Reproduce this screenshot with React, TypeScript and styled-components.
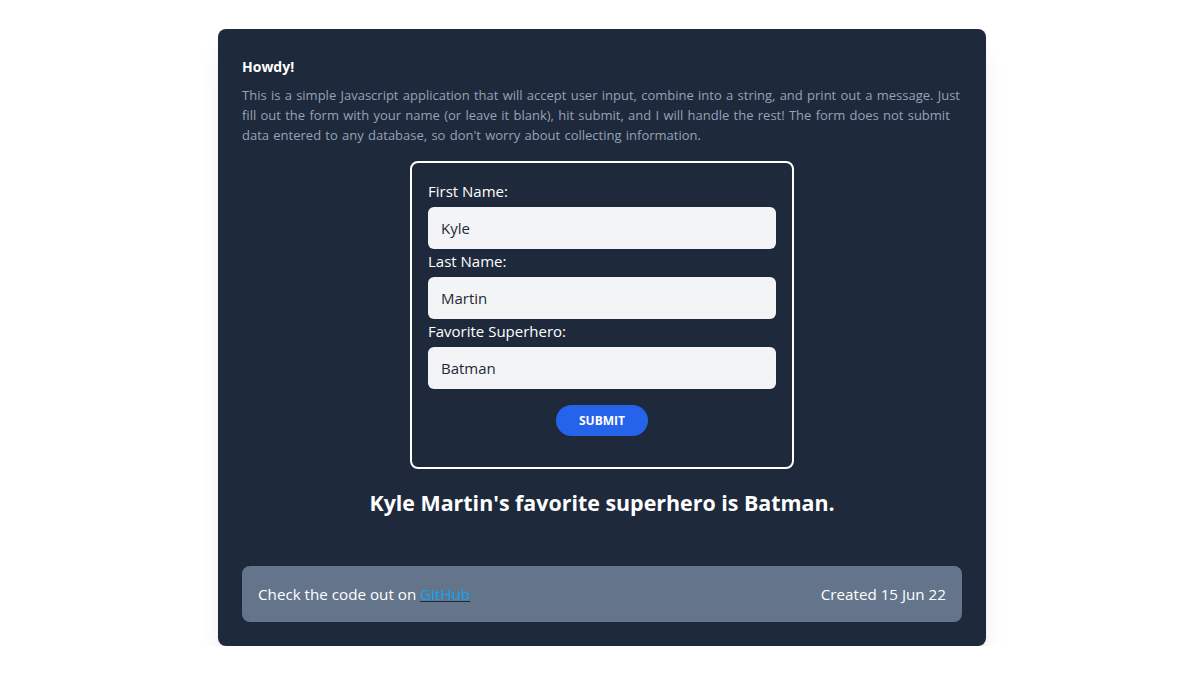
import { useState } from 'react';
import styled, { createGlobalStyle } from 'styled-components';

const GlobalStyle = createGlobalStyle`
  body {
    margin: 0;
    background: #ffffff;
    font-family: 'Open Sans', 'Noto Sans', sans-serif;
  }
  * {
    box-sizing: border-box;
  }
`;

const Card = styled.main`
  width: 768px;
  margin: 29px auto 0;
  padding: 24px;
  background: #1e293b;
  border-radius: 8px;
  box-shadow: 0 20px 25px -5px rgba(0, 0, 0, 0.1), 0 8px 10px -6px rgba(0, 0, 0, 0.1);
`;

const Title = styled.h1`
  margin: 2px 0 0;
  font-size: 14px;
  line-height: 24px;
  font-weight: 700;
  color: #ffffff;
`;

const Intro = styled.p`
  margin: 6px 0 0;
  font-size: 13px;
  word-spacing: 0.9px;
  line-height: 20px;
  color: #94a3b8;
`;

const Form = styled.form`
  width: 384px;
  margin: 16px auto 0;
  padding: 16px 16px 31px;
  border: 2px solid #ffffff;
  border-radius: 8px;
  display: flex;
  flex-direction: column;
`;

const Label = styled.label`
  font-size: 15px;
  line-height: 24px;
  color: #ffffff;
`;

const Input = styled.input`
  margin-top: 4px;
  height: 42px;
  padding: 0 13px;
  border: none;
  border-radius: 6px;
  background: #f3f4f6;
  color: #1f2937;
  font-family: inherit;
  font-size: 15px;

  &:focus {
    outline: none;
  }
`;

const Submit = styled.button`
  align-self: center;
  margin-top: 16px;
  width: 92px;
  height: 31px;
  border: none;
  border-radius: 999px;
  background: #2563eb;
  color: #ffffff;
  font-family: inherit;
  font-size: 12px;
  font-weight: 700;
  text-transform: uppercase;
  cursor: pointer;
`;

const Result = styled.h2`
  margin: 18px 0 0;
  text-align: center;
  font-size: 21.4px;
  line-height: 32px;
  font-weight: 700;
  color: #ffffff;
`;

const Footer = styled.footer`
  margin-top: 47px;
  padding: 16px;
  display: flex;
  justify-content: space-between;
  align-items: center;
  background: #64748b;
  border-radius: 8px;
  font-size: 15.2px;
  line-height: 24px;
  color: #ffffff;
`;

const Link = styled.a`
  color: #0ea5e9;
  text-decoration: underline;
  text-decoration-color: #1e293b;
`;

export default function App() {
  const [first, setFirst] = useState('Kyle');
  const [last, setLast] = useState('Martin');
  const [hero, setHero] = useState('Batman');
  const [message, setMessage] = useState("Kyle Martin's favorite superhero is Batman.");

  const handleSubmit = (e: React.FormEvent) => {
    e.preventDefault();
    setMessage(`${first} ${last}'s favorite superhero is ${hero}.`);
  };

  return (
    <>
      <GlobalStyle />
      <Card>
        <Title>Howdy!</Title>
        <Intro>
          This is a simple Javascript application that will accept user input, combine into a string, and print out a
          message. Just fill out the form with your name (or leave it blank), hit submit, and I will handle the rest!
          The form does not submit data entered to any database, so don't worry about collecting information.
        </Intro>
        <Form onSubmit={handleSubmit}>
          <Label htmlFor="first">First Name:</Label>
          <Input id="first" value={first} onChange={(e) => setFirst(e.target.value)} />
          <Label htmlFor="last">Last Name:</Label>
          <Input id="last" value={last} onChange={(e) => setLast(e.target.value)} />
          <Label htmlFor="hero">Favorite Superhero:</Label>
          <Input id="hero" value={hero} onChange={(e) => setHero(e.target.value)} />
          <Submit type="submit">Submit</Submit>
        </Form>
        <Result>{message}</Result>
        <Footer>
          <span>
            Check the code out on <Link href="#">GitHub</Link>
          </span>
          <span>Created 15 Jun 22</span>
        </Footer>
      </Card>
    </>
  );
}
